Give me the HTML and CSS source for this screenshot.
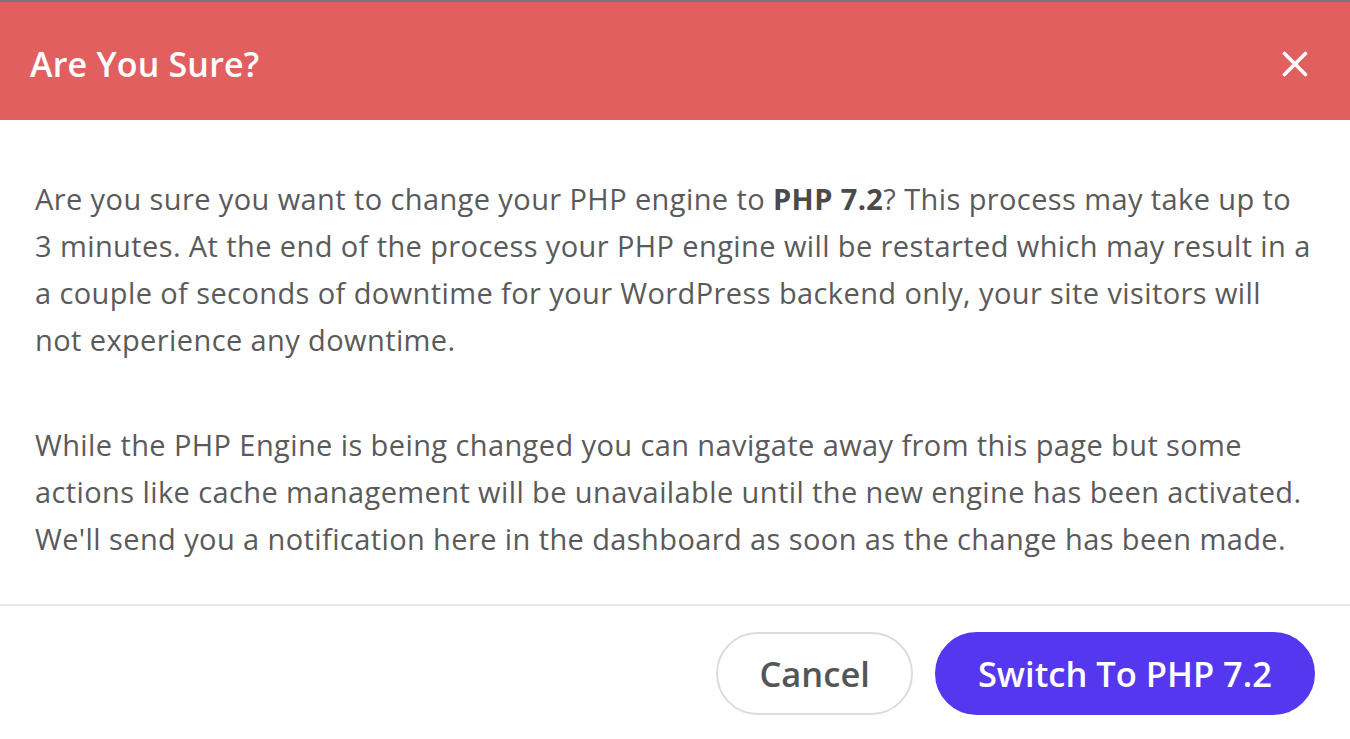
FILE: index.html
```html
<!DOCTYPE html>
<html lang="en">
<head>
  <meta charset="UTF-8">
  <meta name="viewport" content="width=device-width, initial-scale=1.0">
  <title>Are You Sure?</title>
  <link rel="stylesheet" href="styles.css">
</head>
<body>
  <!-- Modal window -->
  <div class="modal">
    <div class="modal-header">
      <h2 class="modal-title">Are You Sure?</h2>
      <button class="modal-close" aria-label="Close">
        <svg width="26" height="26" viewBox="0 0 26 26">
          <path d="M2.5 2.5 L23.5 23.5 M23.5 2.5 L2.5 23.5" stroke="#fff" stroke-width="3.6" stroke-linecap="round" fill="none"/>
        </svg>
      </button>
    </div>

    <div class="modal-body">
      <p>Are you sure you want to change your PHP engine to <b>PHP 7.2</b>? This process may take up to<br>
        3 minutes. At the end of the process your PHP engine will be restarted which may result in a<br>
        a couple of seconds of downtime for your WordPress backend only, your site visitors will<br>
        not experience any downtime.</p>
      <p>While the PHP Engine is being changed you can navigate away from this page but some<br>
        actions like cache management will be unavailable until the new engine has been activated.<br>
        We'll send you a notification here in the dashboard as soon as the change has been made.</p>
    </div>

    <div class="modal-footer">
      <button class="btn btn-cancel">Cancel</button>
      <button class="btn btn-primary">Switch To PHP 7.2</button>
    </div>
  </div>
</body>
</html>
```

FILE: styles.css
```css
/* Page */
body {
  margin: 0;
  padding: 0;
  background: #fff;
  font-family: "Open Sans", "Noto Sans", sans-serif;
  border-top: 2px solid #777;
}

/* Header */
.modal-header {
  height: 112px;
  background-color: #e25f5f;
  display: flex;
  align-items: center;
  justify-content: space-between;
  padding: 6px 30px 0;
}

.modal-title {
  margin: 0;
  color: #fff;
  font-size: 34px;
  font-weight: 600;
  letter-spacing: 0.2px;
}

.modal-close {
  background: none;
  border: none;
  padding: 0;
  width: 26px;
  height: 26px;
  margin-right: 12px;
  cursor: pointer;
  display: flex;
}

/* Body text */
.modal-body {
  padding: 55px 35px 42px;
  color: #5a5a5a;
  font-size: 29px;
  letter-spacing: 0.4px;
  line-height: 47px;
  white-space: nowrap;
}

.modal-body p {
  margin: 0;
}

.modal-body p + p {
  margin-top: 58px;
}

.modal-body b {
  color: #4a4a4a;
}

/* Footer */
.modal-footer {
  border-top: 2px solid #e8e8e8;
  padding: 26px 35px 0;
  display: flex;
  justify-content: flex-end;
  gap: 22px;
}

.btn {
  height: 83px;
  padding: 0 41px;
  border-radius: 42px;
  font-family: inherit;
  font-size: 34.5px;
  font-weight: 600;
  cursor: pointer;
}

.btn-cancel {
  background: #fff;
  border: 2px solid #dcdcdc;
  color: #555;
}

.btn-primary {
  background: #5537ef;
  border: 2px solid #5537ef;
  color: #fff;
}
```
